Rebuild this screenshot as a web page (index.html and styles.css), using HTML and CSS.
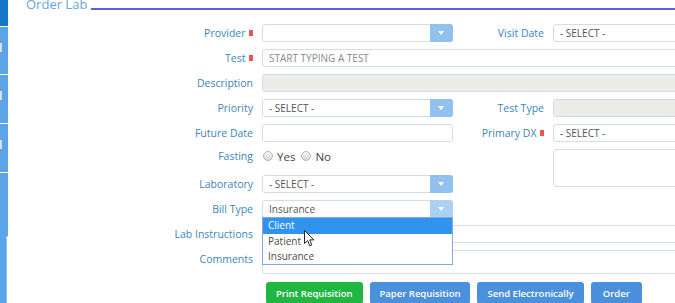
FILE: index.html
```html
<!DOCTYPE html>
<html lang="en">
<head>
  <meta charset="UTF-8" />
  <title>Order Lab</title>
  <link rel="stylesheet" href="styles.css">
</head>
<body>
<div class="app">
  <nav class="rail">
    <span class="rail-tab rail-top"></span>
    <span class="rail-tab mark"></span>
    <span class="rail-tab mark"></span>
    <span class="rail-tab mark"></span>
    <span class="rail-tab rail-last"></span>
    <span class="rail-rest"></span>
  </nav>

  <main class="panel">
    <div class="panel-head">
      <span class="panel-title">Order Lab</span>
      <span class="panel-rule"></span>
    </div>

    <form class="order-form">
      <label class="lbl req">Provider</label>
      <div class="select"><span class="select-val"></span><span class="select-btn"></span></div>
      <label class="lbl right">Visit Date</label>
      <div class="field">- SELECT -</div>

      <label class="lbl req">Test</label>
      <div class="field wide placeholder">START TYPING A TEST</div>

      <label class="lbl">Description</label>
      <div class="field wide disabled"></div>

      <label class="lbl">Priority</label>
      <div class="select"><span class="select-val">- SELECT -</span><span class="select-btn"></span></div>
      <label class="lbl right">Test Type</label>
      <div class="field disabled"></div>

      <label class="lbl">Future Date</label>
      <div class="field"></div>
      <label class="lbl right req">Primary DX</label>
      <div class="select"><span class="select-val">- SELECT -</span><span class="select-btn"></span></div>

      <label class="lbl short">Fasting</label>
      <div class="radios">
        <span class="radio"></span><span class="radio-text">Yes</span>
        <span class="radio"></span><span class="radio-text">No</span>
      </div>
      <div class="field notes"></div>

      <label class="lbl">Laboratory</label>
      <div class="select"><span class="select-val">- SELECT -</span><span class="select-btn"></span></div>

      <label class="lbl">Bill Type</label>
      <div class="select open">
        <span class="select-val">Insurance</span><span class="select-btn"></span>
        <ul class="dropdown">
          <li class="active">Client</li>
          <li>Patient</li>
          <li>Insurance</li>
          <svg class="cursor" width="11" height="17" viewBox="0 0 11 17">
            <path d="M0.5 0.5 L0.5 13.5 L3.6 10.6 L5.8 15.8 L7.8 14.9 L5.7 9.9 L9.8 9.9 Z" fill="#fff" stroke="#222" stroke-width="1"/>
          </svg>
        </ul>
      </div>

      <label class="lbl">Lab Instructions</label>
      <div class="field wide"></div>

      <label class="lbl">Comments</label>
      <div class="field wide comments"></div>

      <div class="actions">
        <button type="button" class="btn btn-green">Print Requisition</button>
        <button type="button" class="btn">Paper Requisition</button>
        <button type="button" class="btn">Send Electronically</button>
        <button type="button" class="btn btn-narrow">Order</button>
      </div>
    </form>
  </main>
</div>
</body>
</html>
```

FILE: styles.css
```css
* { box-sizing: border-box; }
body { margin: 0; background: #fff; font-family: 'Open Sans', sans-serif; overflow: hidden; }
.app { display: flex; width: 730px; height: 303px; }

.rail { width: 9px; display: flex; flex-direction: column; gap: 1px; }
.rail-tab { position: relative; width: 8px; height: 47px; background: #5ca4e8; }
.rail-top { height: 26px; background: #1576c5; }
.rail-tab:nth-child(3), .rail-tab:nth-child(4) { height: 48px; }
.rail-last { height: 65px; border-bottom-right-radius: 4px; }
.rail-rest { flex: 1; width: 7px; margin-top: -1px; background: #5ca4e8; border-right: 1px solid #8cc0f0; }
.mark::before { content: ''; position: absolute; left: 0; top: 16px; width: 2px; height: 9px; background: #cfe4f8; }

.panel { flex: 1; padding-left: 17px; }
.panel-head { display: flex; align-items: flex-end; height: 11px; }
.panel-title { font-size: 13px; line-height: 13px; color: #6aa5dc; white-space: nowrap; }
.panel-rule { flex: 1; height: 2px; margin: 0 0 1px 4px; background: #5b5fe6; }

.order-form {
  display: grid;
  grid-template-columns: 227px 191px 82px 1fr;
  column-gap: 9px;
  row-gap: 7px;
  margin-top: 13px;
}

.lbl { grid-column: 1; display: flex; align-items: center; justify-content: flex-end; align-self: start; height: 18px; font-size: 10.5px; color: #3b86b7; white-space: nowrap; }
.lbl.right { grid-column: 3; }
.lbl.req::after { content: ''; width: 4.5px; height: 6px; margin-left: 3px; background: #ef5350; }
.lbl.short { height: 14px; }

.field, .select { height: 18px; border: 1px solid #d4dce7; border-radius: 3px; background: #fff; font-size: 10px; color: #555; }
.field { padding: 0 6px; line-height: 16px; }
.wide { grid-column: 2 / span 3; }
.placeholder { color: #8a8a8a; }
.disabled { background: #ecece9; }
.notes { grid-column: 4; grid-row: span 2; height: 38px; }
.comments { height: 24px; }

.select { position: relative; display: flex; }
.select-val { flex: 1; padding-left: 6px; line-height: 16px; }
.select-btn { position: relative; width: 23px; margin: -1px -1px -1px 0; border-radius: 0 3px 3px 0; background: #90c1ef; }
.select-btn::after { content: ''; position: absolute; left: 8px; top: 7px; border-left: 3.5px solid transparent; border-right: 3.5px solid transparent; border-top: 4px solid #fff; }
.open .select-btn { background: #acd0f3; }

.dropdown { position: absolute; top: 16px; left: -1px; right: -1px; z-index: 2; margin: 0; padding: 0; list-style: none; background: #fff; border: 1px solid #86a9d8; }
.dropdown li { height: 15px; padding-left: 5px; line-height: 15px; font-size: 10px; color: #4a4a4a; }
.dropdown li.active { height: 16px; background: #3094ee; color: #fff; }
.cursor { position: absolute; left: 41px; top: 12px; }

.radios { grid-column: 2; display: flex; align-items: center; height: 19px; padding-bottom: 5px; font-size: 11.5px; color: #444; }
.radio { width: 10px; height: 10px; margin: 0 4px 0 1px; border: 1px solid #b4b4b4; border-radius: 50%; background: linear-gradient(#f6f6f6, #d9d9d9); }
.radio-text { margin-right: 5px; }
.radios .radio:nth-of-type(2) { margin-left: 2px; margin-right: 3px; }

.actions { grid-column: 2 / span 3; display: flex; gap: 7px; margin: 1px 0 0 4px; }
.btn { height: 22px; padding: 0 10px; border: 0; border-radius: 3px; background: #4b90dc; color: #fff; font-family: inherit; font-size: 9.5px; font-weight: 600; }
.btn-green { background: #1fb742; }
.btn-narrow { padding: 0 12px; }
```
